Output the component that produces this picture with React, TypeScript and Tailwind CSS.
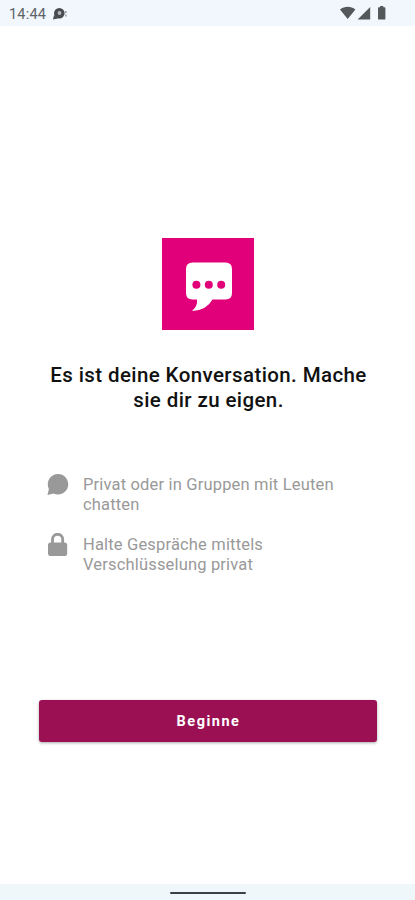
import React from 'react';

const features = [
  { icon: 'chat', lines: ['Privat oder in Gruppen mit Leuten', 'chatten'] },
  { icon: 'lock', lines: ['Halte Gespräche mittels', 'Verschlüsselung privat'] },
];

const ChatIcon: React.FC = () => (
  <svg width="22" height="23" viewBox="0 0 22 23" fill="currentColor">
    <path d="M11.2 1a10.3 10.3 0 1 1-4.7 19.6L0.5 22 1.9 16A10.3 10.3 0 0 1 11.2 1Z" />
  </svg>
);

const LockIcon: React.FC = () => (
  <svg width="22" height="24" viewBox="0 0 22 24" fill="currentColor">
    <path d="M5.5 11V6.4a5.1 5.1 0 0 1 10.2 0V11" fill="none" stroke="currentColor" strokeWidth="2.8" />
    <rect x="1" y="9.4" width="19.2" height="13.6" rx="2.8" />
  </svg>
);

const StatusBar: React.FC = () => (
  <header className="flex h-[26px] items-center justify-between bg-[#f1f7fd] pr-[28px] pl-[9px] text-[#606366]">
    <div className="flex items-center gap-[6px] pt-[3px]">
      <span className="pt-px text-[14.5px] leading-none tracking-[0.2px]">14:44</span>
      <svg className="mb-px" width="16" height="14" viewBox="0 0 16 14">
        <circle cx="7.3" cy="6.2" r="5.3" fill="#494c4f" />
        <path d="M1 12.6 2 8l4 3.5Z" fill="#494c4f" />
        <circle cx="7.5" cy="6" r="1.9" fill="#b4b8bb" />
        <path d="M13.9 4v2M13.9 7.5v2" stroke="#85898c" strokeWidth="1.2" />
      </svg>
    </div>
    <svg width="47" height="16" viewBox="0 0 47 16" fill="#55585b">
      <path d="M0 4.5C4.5 0.7 10.9 0.7 15.4 4.5L7.7 14Z" />
      <path d="M30.2 2v12.5H17.6Z" />
      <path d="M40.1 1h3.2v1.3h1.2q.9 0 .9.9v10.5q0 .9-.9.9h-5.6q-.9 0-.9-.9V3.2q0-.9.9-.9h1.2Z" />
    </svg>
  </header>
);

const App: React.FC = () => {
  return (
    <div className="flex h-screen flex-col overflow-hidden bg-white font-['Roboto',sans-serif]">
      <StatusBar />

      <main className="flex flex-1 flex-col items-center">
        {/* Logo */}
        <svg className="mt-[212px] shrink-0" width="92" height="92" viewBox="0 0 92 92">
          <rect width="92" height="92" fill="#e2007a" />
          <path
            d="M30.5 24.5H63.5Q70 24.5 70 31V55Q70 61.5 63.5 61.5H50.5Q44.5 72.5 30 73Q35.8 68 35 61.5H30.5Q24 61.5 24 55V31Q24 24.5 30.5 24.5Z"
            fill="#fff"
          />
          <g fill="#e2007a">
            <circle cx="34.4" cy="46.7" r="4" />
            <circle cx="46.8" cy="46.7" r="4" />
            <circle cx="59.2" cy="46.7" r="4" />
          </g>
        </svg>

        <h1 className="mt-[33px] pl-[2px] text-center text-[20.5px] leading-[25px] font-medium tracking-[0.4px] whitespace-nowrap text-[#111111]">
          Es ist deine Konversation. Mache
          <br />
          sie dir zu eigen.
        </h1>

        <ul className="mt-[60px] flex w-full flex-col gap-5 pr-6 pl-[47px] text-[#999999]">
          {features.map((feature) => (
            <li key={feature.icon} className="flex h-10 gap-[14px]">
              <span className="w-[22px] shrink-0">
                {feature.icon === 'chat' ? <ChatIcon /> : <LockIcon />}
              </span>
              <p className="pt-[2px] text-[16.5px] leading-5 tracking-[0.17px] whitespace-nowrap">
                {feature.lines[0]}
                <br />
                {feature.lines[1]}
              </p>
            </li>
          ))}
        </ul>

        <button className="mt-[127px] h-[42px] w-[338px] rounded-[3px] bg-[#9a1053] pt-[2px] pl-[2px] text-[14.5px] font-bold tracking-[1.5px] text-white shadow-[0_1px_3px_rgba(0,0,0,0.35)]">
          Beginne
        </button>
      </main>

      {/* Gesture bar */}
      <footer className="flex h-4 items-center justify-center bg-[#f0f7fb]">
        <div className="mt-px h-[2px] w-[76px] rounded-full bg-[#394046]" />
      </footer>
    </div>
  );
};

export default App;
